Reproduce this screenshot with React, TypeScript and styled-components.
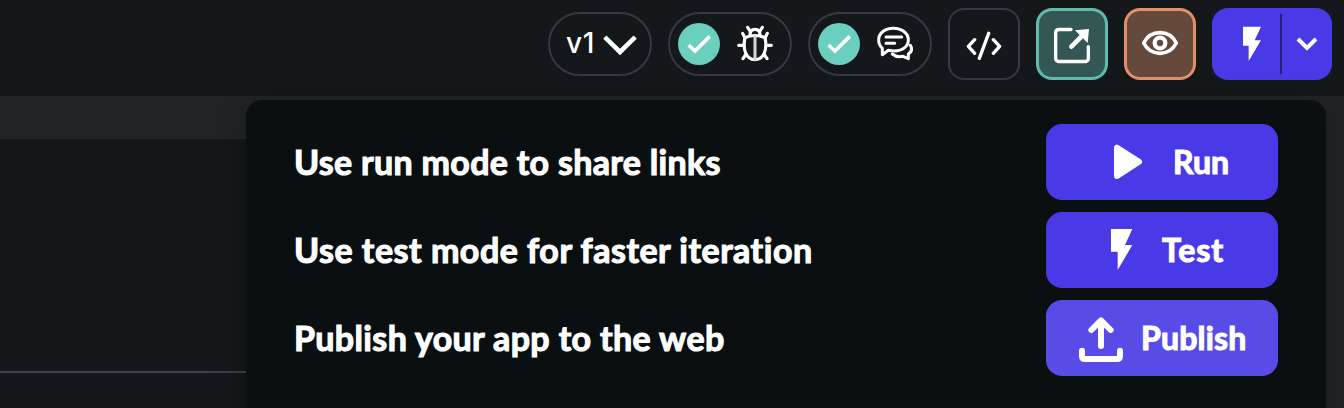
import React from 'react';
import styled, { createGlobalStyle } from 'styled-components';

const GlobalStyle = createGlobalStyle`
  * { box-sizing: border-box; }
  body { margin: 0; background: #14181b; font-family: Lato, 'Open Sans', sans-serif; color: #fff; overflow: hidden; }
  button { font: inherit; color: inherit; margin: 0; cursor: pointer; }
  svg { display: block; flex: none; }
`;

const Page = styled.div`
  position: relative;
  display: flex;
  flex-direction: column;
  width: 1344px;
  height: 408px;
  overflow: hidden;
`;

const Toolbar = styled.header`
  display: flex;
  align-items: center;
  justify-content: flex-end;
  gap: 16px;
  height: 96px;
  padding: 0 12px 8px 0;
  background: #14181b;
`;

const Pill = styled.button<{ $width: number; $gap: number; $pad: number }>`
  display: flex;
  align-items: center;
  gap: ${p => p.$gap}px;
  width: ${p => p.$width}px;
  height: 64px;
  padding: 0 0 0 ${p => p.$pad}px;
  border: 2px solid #343a45;
  border-radius: 32px;
  background: none;
`;

const Version = styled.span`
  width: 33px;
  padding-bottom: 2px;
  font: 500 28px/32px Inter, sans-serif;
  letter-spacing: 0.6px;
  text-align: left;
  white-space: nowrap;
`;

const Status = styled.span`
  display: grid;
  place-items: center;
  width: 42px;
  height: 42px;
  border-radius: 50%;
  background: #6bcfbf;
`;

const tones = {
  plain: 'background: none; border: 2px solid #343a45;',
  teal: 'background: #335854; border: 3px solid #5fbdae;',
  orange: 'background: #65493b; border: 3px solid #e29069;',
};

const Square = styled.button<{ $tone: keyof typeof tones }>`
  display: grid;
  place-items: center;
  width: 72px;
  height: 72px;
  padding: 0;
  border-radius: 16px;
  ${p => tones[p.$tone]}
`;

const RunGroup = styled.div`
  display: flex;
  align-items: center;
  width: 120px;
  height: 72px;
  border-radius: 16px;
  background: #4a39e6;
`;

const RunPart = styled.button<{ $width: number }>`
  display: grid;
  place-items: center;
  width: ${p => p.$width}px;
  height: 72px;
  padding: 0;
  border: 0;
  background: none;
`;

const Divider = styled.span`
  width: 2px;
  height: 60px;
  background: #271d75;
`;

const Workspace = styled.main`
  display: flex;
  flex: 1;
  background: #202427;
`;

const Canvas = styled.div`
  display: flex;
  flex-direction: column;
  width: 1290px;
  margin-top: 43px;
  background: #14181b;
`;

const CanvasTop = styled.div`
  height: 234px;
  border-bottom: 2px solid #3a404b;
`;

const Menu = styled.section`
  position: absolute;
  top: 100px;
  left: 246px;
  display: flex;
  flex-direction: column;
  gap: 12px;
  width: 1080px;
  height: 340px;
  padding: 24px 48px;
  border-radius: 16px;
  background: #0a0f12;
  box-shadow: 0 4px 32px rgba(0, 0, 0, 0.2);
`;

const Row = styled.div`
  display: flex;
  align-items: center;
  justify-content: space-between;
  height: 76px;
`;

const Caption = styled.span<{ $track: number }>`
  font-size: 34px;
  font-weight: 700;
  line-height: 40px;
  letter-spacing: ${p => p.$track}px;
  -webkit-text-stroke: 1.1px #fff;
  white-space: nowrap;
`;

const Action = styled.button<{ $pad: number; $gap: number; $active?: boolean }>`
  display: flex;
  align-items: center;
  gap: ${p => p.$gap}px;
  width: 232px;
  height: 76px;
  padding: 0 0 0 ${p => p.$pad}px;
  border: 0;
  border-radius: 16px;
  background: ${p => (p.$active ? '#594be6' : '#4a39e6')};
`;

const Label = styled.span<{ $track: number }>`
  font-size: 32px;
  font-weight: 700;
  line-height: 40px;
  letter-spacing: ${p => p.$track}px;
  -webkit-text-stroke: 1.1px #fff;
  white-space: nowrap;
`;

const Icon = ({ box, w, h, children }: { box: string; w: number; h: number; children: React.ReactNode }) => (
  <svg width={w} height={h} viewBox={box} fill="none" stroke="#fff" strokeLinecap="round" strokeLinejoin="round">
    {children}
  </svg>
);

const Check = () => (
  <Status>
    <Icon box="0 0 42 42" w={42} h={42}>
      <path d="M10.600 22 17 28 31.800 13.400" strokeWidth="3.600" strokeLinecap="butt" strokeLinejoin="miter" />
    </Icon>
  </Status>
);

const BugIcon = () => (
  <Icon box="18 78 114 120" w={38} h={40}>
    <g strokeWidth="9.500">
      <path d="M45 119Q75 106 105 119C112 150 104 185 75 185C46 185 38 150 45 119Z" />
      <path d="M60 111C60 99 65 94 75 94C85 94 90 99 90 111" />
      <path d="M75 116V184" strokeWidth="9" stroke="#d5d6d7" />
      <path d="M60 99 53 88M90 99 97 88M44 118 38 106M106 118 112 106M40 142H26M110 142H124M47 170 39 182M103 170 111 182" />
    </g>
  </Icon>
);

const ChatIcon = () => (
  <Icon box="438 78 114 120" w={38} h={40}>
    <g strokeWidth="9">
      <path d="M457 170V151C449 144 446 136 446 126C446 105 465 91 490 91C515 91 535 105 535 126C535 147 515 159 493 159C486 159 480 158 475 157Z" />
      <path d="M541 142C547 152 546 161 535 168V182L519 175C506 178 494 174 487 168" />
      <path d="M468 117H515M468 136H494" />
    </g>
  </Icon>
);

const CodeIcon = () => (
  <Icon box="78 84 108 96" w={36} h={32}>
    <path d="M104 119 85 139 104 160M160 119 179 139 160 160M146 100 118 175" strokeWidth="10" />
  </Icon>
);

const OpenIcon = () => (
  <Icon box="336 72 120 120" w={40} h={40}>
    <path d="M393 88.500H357Q347 88.500 347 98V175Q347 184.500 357 184.500H436Q445 184.500 445 175V140" strokeWidth="10" />
    <path d="M394 140 430 104" strokeWidth="14" />
    <path d="M405 91 447 87 443 129Z" fill="#fff" stroke="none" />
  </Icon>
);

const EyeIcon = () => (
  <Icon box="60 72 120 120" w={40} h={40}>
    <path d="M71 129C82 108 99 98 120 98C141 98 158 108 169 129C158 150 141 160 120 160C99 160 82 150 71 129Z" strokeWidth="11" />
    <circle cx="120" cy="129" r="16" strokeWidth="13" />
  </Icon>
);

const BoltIcon = () => (
  <Icon box="318 72 120 120" w={40} h={40}>
    <path d="M369 80H423L404 121H423L386 183V137H369Z" fill="#fff" stroke="none" />
  </Icon>
);

export default function App() {
  return (
    <Page>
      <GlobalStyle />
      <Toolbar>
        <Pill $width={104} $gap={4} $pad={16}>
          <Version>v1</Version>
          <Icon box="0 0 34 40" w={34} h={40}>
            <path d="M1.800 13.200 17 28 32.200 13.200" strokeWidth="4.600" strokeLinecap="butt" strokeLinejoin="miter" />
          </Icon>
        </Pill>
        <Pill $width={124} $gap={16} $pad={8}><Check /><BugIcon /></Pill>
        <Pill $width={124} $gap={16} $pad={8}><Check /><ChatIcon /></Pill>
        <Square $tone="plain"><CodeIcon /></Square>
        <Square $tone="teal"><OpenIcon /></Square>
        <Square $tone="orange"><EyeIcon /></Square>
        <RunGroup>
          <RunPart $width={68}><BoltIcon /></RunPart>
          <Divider />
          <RunPart $width={50}>
            <Icon box="501 72 120 120" w={40} h={40}>
              <path d="M534 117 561 144 588 117" strokeWidth="12" strokeLinecap="butt" strokeLinejoin="miter" />
            </Icon>
          </RunPart>
        </RunGroup>
      </Toolbar>
      <Workspace>
        <Canvas><CanvasTop /></Canvas>
      </Workspace>
      <Menu>
        <Row>
          <Caption $track={0.3}>Use run mode to share links</Caption>
          <Action $pad={58} $gap={21}>
            <Icon box="222 84 144 144" w={48} h={48}>
              <path d="M261 113V198L327 155.500Z" fill="#fff" strokeWidth="18" />
            </Icon>
            <Label $track={0}>Run</Label>
          </Action>
        </Row>
        <Row>
          <Caption $track={0.5}>Use test mode for faster iteration</Caption>
          <Action $pad={52} $gap={16}>
            <Icon box="204 348 144 144" w={48} h={48}>
              <path d="M243 357H307L285 405H307L263 480V425H243Z" fill="#fff" stroke="none" />
            </Icon>
            <Label $track={0.9}>Test</Label>
          </Action>
        </Row>
        <Row>
          <Caption $track={0.36}>Publish your app to the web</Caption>
          <Action $pad={31} $gap={16} $active>
            <Icon box="141 192 144 144" w={48} h={48}>
              <path d="M213 288V214M184 240 213 211 242 240M156 302V318Q156 327 165 327H261Q270 327 270 318V302" strokeWidth="18" />
            </Icon>
            <Label $track={0.2}>Publish</Label>
          </Action>
        </Row>
      </Menu>
    </Page>
  );
}
